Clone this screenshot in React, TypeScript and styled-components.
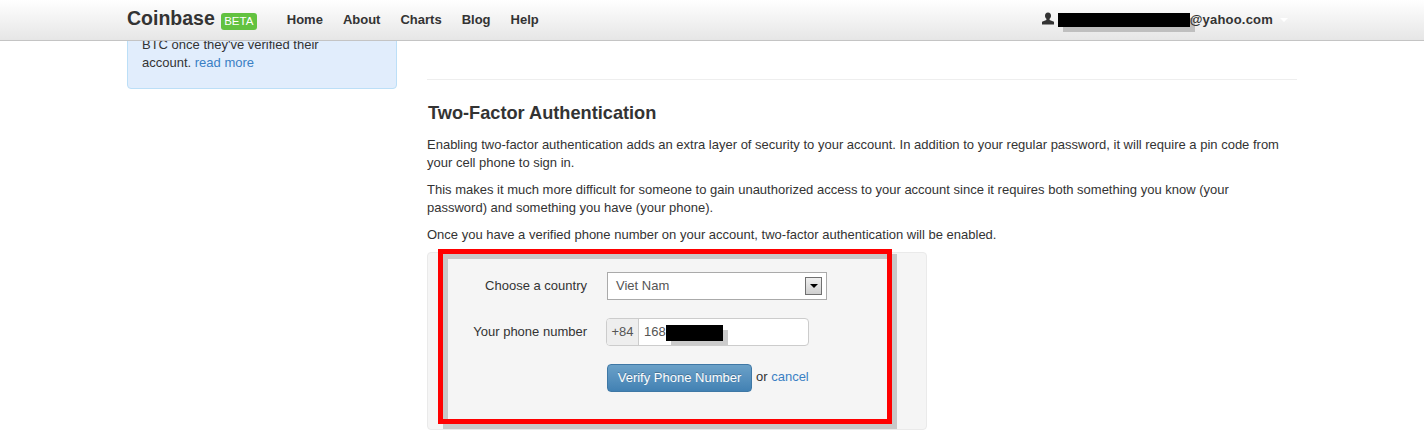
import React from 'react'
import styled, { createGlobalStyle } from 'styled-components'

const GlobalStyle = createGlobalStyle`
	html, body {
		margin: 0;
		height: 437px;
		overflow: hidden;
		background: #fff;
		color: #333;
		font-family: 'Liberation Sans', Arial, sans-serif;
		font-size: 13px;
		line-height: 18px;
	}
`

const Navbar = styled.header`
	position: fixed;
	top: 0;
	left: 0;
	right: 0;
	z-index: 10;
	height: 40px;
	display: flex;
	align-items: center;
	padding: 0 127px;
	background: linear-gradient(#ffffff, #e6e6e6);
	border-bottom: 1px solid #c4c4c4;
`

const Brand = styled.a`
	font-size: 19.5px;
	font-weight: bold;
	color: #333;
	line-height: 24px;
	margin-top: -5px;
`

const BetaBadge = styled.span`
	margin-left: 6px;
	margin-top: 3px;
	width: 36px;
	height: 17px;
	display: inline-flex;
	align-items: center;
	justify-content: center;
	background: #62c240;
	border-radius: 3px;
	color: #fff;
	font-size: 11.5px;
	line-height: 17px;
`

const NavLinks = styled.nav`
	display: flex;
	gap: 20px;
	margin-left: 30px;
`

const NavLink = styled.a`
	font-weight: bold;
	font-size: 13px;
	color: #333;
`

const UserMenu = styled.div`
	margin-left: auto;
	margin-right: 9px;
	display: flex;
	align-items: center;
	font-weight: bold;
	font-size: 13px;
	letter-spacing: 0.2px;
	color: #333;
`

const UserIcon = styled.svg`
	width: 14px;
	height: 14px;
	margin-right: 3px;
	margin-top: -3px;
	fill: #333;
`

const Redaction = styled.span<{ $width: number; $height: number }>`
	display: inline-block;
	width: ${p => p.$width}px;
	height: ${p => p.$height}px;
	background: #000;
	box-shadow: 5px 5px 0 #bfbfbf;
`

const Caret = styled.span`
	width: 0;
	height: 0;
	margin-left: 7px;
	border: 4px solid transparent;
	border-top-color: #fff;
	border-bottom: 0;
`

const Page = styled.div`
	display: flex;
	gap: 30px;
	padding: 0 127px;
`

const Sidebar = styled.aside`
	width: 270px;
	flex: none;
	height: 99px;
	margin-top: -10px;
	box-sizing: border-box;
	padding: 45px 14px 0;
	background: #e1edfc;
	border: 1px solid #bcdff7;
	border-radius: 4px;
	line-height: 18px;
`

const Link = styled.a`
	color: #3a7fc4;
`

const Main = styled.main`
	flex: 1;
	padding-top: 79px;
`

const Rule = styled.hr`
	margin: 0 0 20px;
	border: 0;
	border-top: 1px solid #eee;
`

const Title = styled.h3`
	margin: 0 0 10px 1px;
	font-size: 18.2px;
	line-height: 26px;
	color: #333;
`

const Paragraph = styled.p`
	margin: 0 0 9px;
	max-width: 860px;
`

const FormBox = styled.form`
	position: relative;
	width: 500px;
	height: 178px;
	box-sizing: border-box;
	padding: 19px 0 0 0;
	margin-top: -1px;
	background: #f5f5f5;
	border: 1px solid #eaeaea;
	border-radius: 4px;
`

const FormRow = styled.div`
	display: flex;
	align-items: center;
	margin-bottom: 18px;
`

const Label = styled.label`
	width: 159px;
	text-align: right;
	margin-right: 20px;
`

const SelectBox = styled.div`
	width: 220px;
	height: 28px;
	box-sizing: border-box;
	display: flex;
	align-items: center;
	justify-content: space-between;
	padding: 0 4px 0 8px;
	background: #fff;
	border: 1px solid #aaa;
	color: #555;
`

const SelectArrow = styled.span`
	width: 17px;
	height: 18px;
	box-sizing: border-box;
	display: flex;
	align-items: center;
	justify-content: center;
	background: linear-gradient(#f0f0f0, #cfcfcf);
	border: 1px solid #707070;

	&::after {
		content: '';
		border: 4px solid transparent;
		border-top-color: #000;
		border-bottom: 0;
	}
`

const InputGroup = styled.div`
	width: 203px;
	height: 28px;
	margin-left: -1px;
	box-sizing: border-box;
	display: flex;
	align-items: stretch;
	background: #fff;
	border: 1px solid #ccc;
	border-radius: 4px;
	overflow: hidden;
`

const AddOn = styled.span`
	width: 32px;
	box-sizing: border-box;
	display: flex;
	align-items: center;
	justify-content: center;
	background: #eee;
	border-right: 1px solid #ccc;
	color: #555;
`

const PhoneValue = styled.span`
	display: flex;
	align-items: center;
	padding-left: 5px;
	color: #555;
`

const PhoneRedaction = styled(Redaction)`
	margin-top: 1px;
	box-shadow: 5px 5px 0 #cbcbcb;
`

const VerifyButton = styled.button`
	width: 145px;
	height: 28px;
	padding: 0;
	font: inherit;
	color: #fff;
	opacity: 0.98;
	background: linear-gradient(#69a0c8, #3f7fb2);
	border: 1px solid #3c76a4;
	border-radius: 4px;
	text-shadow: 0 -1px 0 rgba(0, 0, 0, 0.25);
`

const Actions = styled.div`
	display: flex;
	align-items: center;
	margin-left: 179px;
	gap: 4px;
`

const OrText = styled.span`
	margin-top: -3px;
`

// red annotation drawn on top of the form in the screenshot
const Annotation = styled.div`
	position: absolute;
	left: 10px;
	top: -4px;
	width: 454px;
	height: 175px;
	box-sizing: border-box;
	border: 5px solid #f00;
	box-shadow: 5px 5px 0 #c8c8c8, inset 5px 5px 0 #c8c8c8;
	pointer-events: none;
`

export default function App() {
	return (
		<>
			<GlobalStyle />
			<Navbar>
				<Brand>Coinbase</Brand>
				<BetaBadge>BETA</BetaBadge>
				<NavLinks>
					<NavLink>Home</NavLink>
					<NavLink>About</NavLink>
					<NavLink>Charts</NavLink>
					<NavLink>Blog</NavLink>
					<NavLink>Help</NavLink>
				</NavLinks>
				<UserMenu>
					<UserIcon viewBox='0 0 14 14'>
						<path d='M7 0.5c-2 0-3 1.4-3 3.2 0 1.3.6 2.5 1.4 3.1v1.1L1 9.8V12.5h12V9.8L8.6 7.9V6.8c.8-.6 1.4-1.8 1.4-3.1 0-1.8-1-3.2-3-3.2z' />
					</UserIcon>
					<Redaction $width={132} $height={14} />
					<span>@yahoo.com</span>
					<Caret />
				</UserMenu>
			</Navbar>
			<Page>
				<Sidebar>
					BTC once they've verified their
					<br />
					account. <Link>read more</Link>
				</Sidebar>
				<Main>
					<Rule />
					<Title>Two-Factor Authentication</Title>
					<Paragraph>
						Enabling two-factor authentication adds an extra layer of security to your account. In addition to your regular password, it will require a pin code from your cell phone to sign in.
					</Paragraph>
					<Paragraph>
						This makes it much more difficult for someone to gain unauthorized access to your account since it requires both something you know (your password) and something you have (your phone).
					</Paragraph>
					<Paragraph>Once you have a verified phone number on your account, two-factor authentication will be enabled.</Paragraph>
					<FormBox>
						<FormRow>
							<Label>Choose a country</Label>
							<SelectBox>
								Viet Nam
								<SelectArrow />
							</SelectBox>
						</FormRow>
						<FormRow>
							<Label>Your phone number</Label>
							<InputGroup>
								<AddOn>+84</AddOn>
								<PhoneValue>
									168
									<PhoneRedaction $width={57} $height={16} />
								</PhoneValue>
							</InputGroup>
						</FormRow>
						<Actions>
							<VerifyButton type='button'>Verify Phone Number</VerifyButton>
							<OrText>
								or <Link>cancel</Link>
							</OrText>
						</Actions>
						<Annotation />
					</FormBox>
				</Main>
			</Page>
		</>
	)
}
